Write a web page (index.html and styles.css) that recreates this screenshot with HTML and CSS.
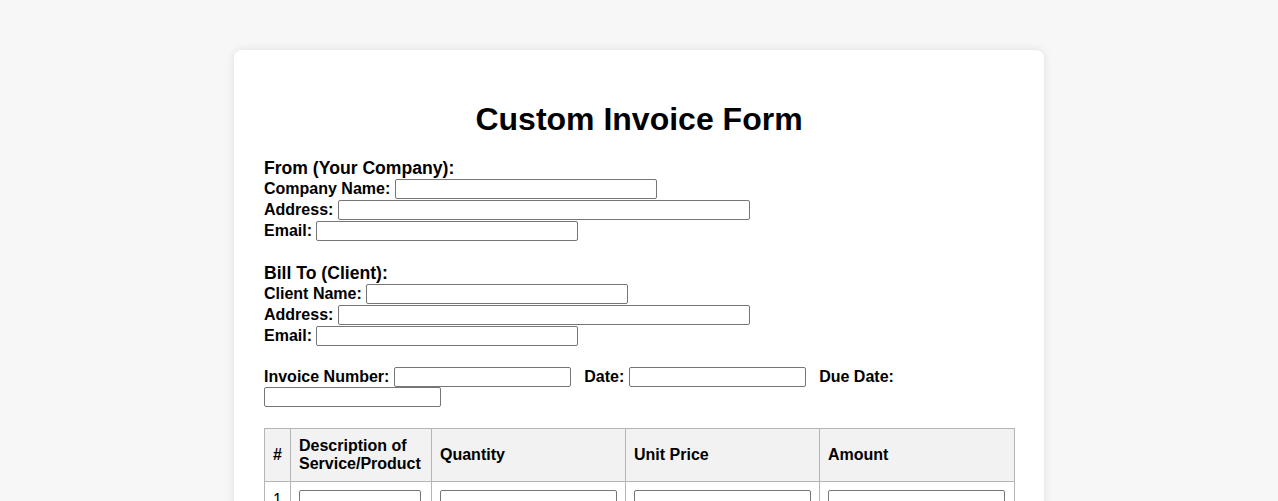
FILE: index.html
```html
<!DOCTYPE html>
<html lang="en">
<head>
<meta charset="utf-8">
<title>Custom Invoice Form</title>
<link rel="stylesheet" href="styles.css">
</head>
<body>
<div class="card">
  <h1 class="title">Custom Invoice Form</h1>
  <form class="form">
    <div class="section">
      <div class="section-title">From (Your Company):</div>
      <div class="row"><label>Company Name:</label> <input type="text" class="w-md"></div>
      <div class="row"><label>Address:</label> <input type="text" class="w-lg"></div>
      <div class="row"><label>Email:</label> <input type="text" class="w-md"></div>
    </div>
    <div class="section">
      <div class="section-title">Bill To (Client):</div>
      <div class="row"><label>Client Name:</label> <input type="text" class="w-md"></div>
      <div class="row"><label>Address:</label> <input type="text" class="w-lg"></div>
      <div class="row"><label>Email:</label> <input type="text" class="w-md"></div>
    </div>
    <div class="section meta">
      <label>Invoice Number:</label> <input type="text" class="w-sm spaced">
      <label>Date:</label> <input type="text" class="w-sm spaced">
      <label>Due Date:</label> <input type="text" class="w-sm">
    </div>
    <table class="items">
      <colgroup>
        <col class="c-num"><col class="c-desc"><col class="c-qty"><col class="c-price"><col class="c-amt">
      </colgroup>
      <thead>
        <tr><th>#</th><th>Description of Service/Product</th><th>Quantity</th><th>Unit Price</th><th>Amount</th></tr>
      </thead>
      <tbody>
        <tr>
          <td>1</td>
          <td><input type="text" class="w-desc"></td>
          <td><input type="text" class="w-sm"></td>
          <td><input type="text" class="w-sm"></td>
          <td><input type="text" class="w-sm"></td>
        </tr>
      </tbody>
    </table>
  </form>
</div>
</body>
</html>
```
FILE: styles.css
```css
html, body {
  margin: 0;
  padding: 0;
}
body {
  background: #f7f7f7;
  font-family: "Liberation Sans", Arial, sans-serif;
  color: #000;
  padding: 50px 0;
}
.card {
  width: 750px;
  margin: 0 auto;
  padding: 30px;
  background: #fff;
  border-radius: 8px;
  box-shadow: 0 0 10px rgba(0, 0, 0, 0.1);
}
.title {
  font-size: 32px;
  font-weight: bold;
  text-align: center;
  margin: 21px 0 19px;
}
.form {
  margin: 0;
}
.section {
  margin-bottom: 20px;
}
.section-title {
  font-size: 17.6px;
  font-weight: bold;
  line-height: 22px;
}
.row {
  height: 21px;
  font-size: 16px;
  font-weight: bold;
  white-space: nowrap;
}
.meta {
  font-size: 16px;
  font-weight: bold;
  margin-bottom: 21px;
}
label {
  font-weight: bold;
}
input {
  box-sizing: border-box;
  height: 20px;
  padding: 1px 2px;
  border: 1px solid #767676;
  border-radius: 2px;
  font: 13.33px "Liberation Sans", Arial, sans-serif;
  vertical-align: baseline;
  background: #fff;
}
.w-sm { width: 177px; }
.w-md { width: 262px; }
.w-lg { width: 412px; }
.w-desc { width: 122px; }
.spaced { margin-right: 9px; }
.items {
  width: 750px;
  border-collapse: collapse;
  table-layout: fixed;
}
.c-num { width: 26px; }
.c-desc { width: 141px; }
.c-qty { width: 194px; }
.c-price { width: 194px; }
.c-amt { width: 195px; }
.items th, .items td {
  border: 1px solid #b5b5b5;
  padding: 8px;
  text-align: left;
  font-size: 16px;
}
.items th {
  background: #f2f2f2;
  font-weight: bold;
}
```
